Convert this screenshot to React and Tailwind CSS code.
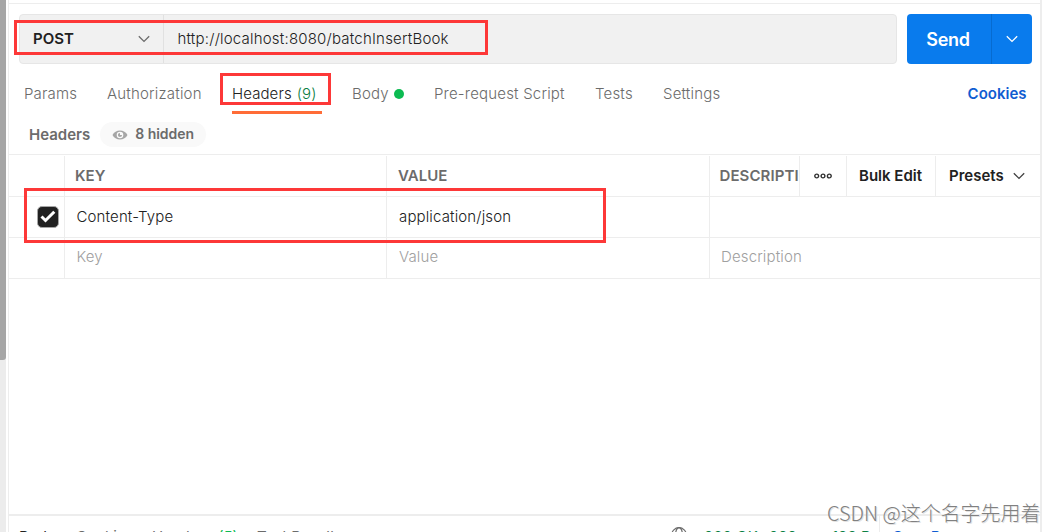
import { clsx } from "clsx";

const TABS = [
  { label: "Params", width: "w-[83px]" },
  { label: "Authorization", width: "w-[125px]" },
  { label: "Headers", count: 9, active: true, width: "w-[120px]" },
  { label: "Body", dot: true, width: "w-[82px]" },
  { label: "Pre-request Script", width: "w-[161px]" },
  { label: "Tests", width: "w-[68px]" },
  { label: "Settings", width: "w-[70px]" },
];

function Chevron({ className }) {
  return (
    <svg className={className} width="12" height="8" viewBox="0 0 12 8" fill="none" stroke="currentColor" strokeWidth="1.3" aria-hidden="true">
      <path d="M0.8 1.2 6 6.4l5.2-5.2" />
    </svg>
  );
}

function Eye() {
  return (
    <svg width="16" height="10" viewBox="0 0 16 10" aria-hidden="true">
      <path fill="#a6a6a6" fillRule="evenodd" d="M0.5 5C2 2.2 4.7 0.5 8 0.5S14 2.2 15.5 5C14 7.8 11.3 9.5 8 9.5S2 7.8 0.5 5ZM8 1.7a3.3 3.3 0 1 0 0 6.6a3.3 3.3 0 0 0 0-6.6Z" />
      <path fill="#a6a6a6" d="M8 2.9V5h2.1A2.1 2.1 0 1 1 8 2.9Z" />
    </svg>
  );
}

function Globe() {
  return (
    <svg width="16" height="16" viewBox="0 0 16 16" fill="none" stroke="#6b6b6b" strokeWidth="1.2" aria-hidden="true">
      <circle cx="8" cy="8" r="7.3" />
      <ellipse cx="8" cy="8" rx="3.5" ry="7.3" />
      <path d="M1 5.5h14M1 10.5h14" />
    </svg>
  );
}

function Highlight({ className }) {
  return <div className={clsx("pointer-events-none absolute border-3 border-[#fd3838]", className)} />;
}

function UrlBar() {
  return (
    <div className="flex h-[50px] gap-[10px] pr-2 pl-[10px]">
      <div className="flex w-[878px] rounded-[4px] border border-[#e6e6e6] bg-[#f1f1f1]">
        <button className="flex w-[144px] items-center justify-between border-r border-[#e1e1e1] px-[13px] font-semibold text-[#212121]" type="button">
          <span className="pt-px text-[15px]">POST</span>
          <Chevron className="text-[#6b6b6b]" />
        </button>
        <span className="pt-[13px] pl-[13.5px] leading-[22px] tracking-[0.2px] text-[#212121]">http://localhost:8080/batchInsertBook</span>
      </div>
      <div className="flex w-[125px] rounded-[4px] bg-[#097bed] text-white">
        <button className="w-[85px] border-r border-[#066bd0] pr-[2px] text-center text-[18px] font-semibold tracking-[-0.3px]" type="button">Send</button>
        <button className="grid flex-1 place-items-center" type="button">
          <Chevron />
        </button>
      </div>
    </div>
  );
}

function Tabs() {
  return (
    <nav className="flex h-[50px] pt-[19px] pl-[15px] leading-[22px] tracking-[0.19px] text-[#6b6b6b]">
      {TABS.map((tab) => (
        <div key={tab.label} className={clsx("flex shrink-0 whitespace-nowrap", tab.width)}>
          <div className={clsx("flex h-[31px]", tab.active && "w-[90px] border-b-3 border-[#ff6c37] tracking-[0.1px] text-[#212121]")}>
            {tab.label}
            {tab.count ? <span className="ml-[5px] text-[#0b8043]">({tab.count})</span> : null}
            {tab.dot ? <span className="mt-[6px] ml-[5px] size-[10px] rounded-full bg-[#0cbb52]" /> : null}
          </div>
        </div>
      ))}
      <a className="mr-[13.5px] ml-auto font-semibold tracking-normal text-[#0f5cd1]">Cookies</a>
    </nav>
  );
}

function Row({ className, first, cells }) {
  return (
    <div className={clsx("flex border-b border-[#ededed] tracking-[0.14px]", className)}>
      <div className="w-[56px] border-r border-[#ededed] pt-[9px] pl-[28px]">{first}</div>
      <div className="w-[322px] border-r border-[#ededed] pl-[11.5px]">{cells[0]}</div>
      <div className="w-[323px] border-r border-[#ededed] pl-3">{cells[1]}</div>
      <div className="pl-[11px]">{cells[2]}</div>
    </div>
  );
}

function HeadersTable() {
  return (
    <section className="border-t border-[#ededed]">
      <div className="flex h-[42px] border-b border-[#ededed] pt-px leading-[22px] font-semibold text-[#6b6b6b]">
        <div className="w-[56px] border-r border-[#ededed]" />
        <div className="w-[322px] border-r border-[#ededed] pt-[9px] pl-[10px]">KEY</div>
        <div className="w-[323px] border-r border-[#ededed] pt-[9px] pl-[11px]">VALUE</div>
        <div className="w-[90px] overflow-hidden border-r border-[#ededed] pt-[9px] pl-[9.5px] tracking-[0.1px]">DESCRIPTION</div>
        <div className="grid w-[47px] place-items-center border-r border-[#ededed]">
          <svg width="18" height="6" viewBox="0 0 18 6" fill="none" stroke="#303030" strokeWidth="1.4" aria-hidden="true">
            <circle cx="2.7" cy="3" r="1.9" />
            <circle cx="9" cy="3" r="1.9" />
            <circle cx="15.3" cy="3" r="1.9" />
          </svg>
        </div>
        <button className="w-[89px] border-r border-[#ededed] pl-[12px] text-left text-[#212121]" type="button">Bulk Edit</button>
        <button className="flex flex-1 items-center gap-[9px] pl-[13px] text-[#212121]" type="button">
          Presets
          <Chevron className="text-[#404040]" />
        </button>
      </div>
      <Row
        className="h-[41px] leading-[40px] text-[#212121]"
        first={
          <span className="grid size-[22px] place-items-center rounded-[5px] border border-[#a6a6a6] bg-[#212121]">
            <svg className="-mt-[2px]" width="16" height="13" viewBox="0 0 16 13" fill="none" stroke="#fff" strokeWidth="3" aria-hidden="true">
              <path d="m1.5 6.5 4 4L14.3 1.7" />
            </svg>
          </span>
        }
        cells={["Content-Type", "application/json", null]}
      />
      <Row className="h-[41px] leading-[38px] text-[#a0a0a0]" cells={["Key", "Value", "Description"]} />
    </section>
  );
}

function ResponseBar() {
  return (
    <footer className="flex h-[18px] shrink-0 overflow-hidden border-t-2 border-[#ededed] pt-[10px] pl-[10px] leading-[22px] font-normal whitespace-nowrap text-[#6b6b6b]">
      <span className="w-[57px] text-[#212121]">Body</span>
      <span className="w-[76px]">Cookies</span>
      <span className="w-[66px]">Headers</span>
      <span className="w-[39px] text-[#0cbb52]">(5)</span>
      <span className="w-[414px]">Test Results</span>
      <span className="w-[33px] pt-[1px]"><Globe /></span>
      <span className="w-[65px] text-[#0b8043]">200 OK</span>
      <span className="w-[63px] text-[#0b8043]">299 ms</span>
      <span className="w-[47px] text-[#0b8043]">188 B</span>
      <span className="-mt-[10px] border-l border-[#ededed] pt-[10px] pl-[13px] text-[14.5px] font-semibold text-[#0f5cd1]">Save Response</span>
    </footer>
  );
}

export default function App() {
  return (
    <div className="relative flex h-[532px] w-[1054px] overflow-hidden bg-white font-['Inter',sans-serif] text-[15px] font-[350]">
      <div className="w-[6px] bg-[#ececec]">
        <div className="h-[360px] rounded-br-[3px] bg-[#a6a6a6]" />
      </div>
      <main className="ml-[2px] flex w-[1034px] flex-col border-r-2 border-l border-[#ededed]">
        <div className="mb-[10px] h-1 shrink-0 border-b border-[#ededed]" />
        <UrlBar />
        <Tabs />
        <div className="flex h-[40px] shrink-0 items-center gap-[10px] pl-5 font-semibold text-[#6b6b6b]">
          <span className="pt-[2px]">Headers</span>
          <span className="flex h-[25px] items-center gap-[7px] rounded-full bg-[#f9f9f9] px-3 text-[14px] tracking-[-0.05px]">
            <span className="pt-px"><Eye /></span>
            <span className="pb-px">8 hidden</span>
          </span>
        </div>
        <HeadersTable />
        <div className="flex-1" />
        <ResponseBar />
      </main>

      <Highlight className="top-[20px] left-[14px] h-[35px] w-[474px]" />
      <Highlight className="top-[73px] left-[220px] h-[32px] w-[111px]" />
      <Highlight className="top-[188px] left-[24px] h-[55px] w-[582px]" />
      <div className="absolute top-[499px] left-[827px] font-['Noto_Sans_CJK_SC',sans-serif] text-[20px] leading-[28px] font-light tracking-[-0.03px] whitespace-nowrap text-[#808080] [text-shadow:1px_1px_0_#e2e2e2]">
        CSDN @这个名字先用着
      </div>
    </div>
  );
}
